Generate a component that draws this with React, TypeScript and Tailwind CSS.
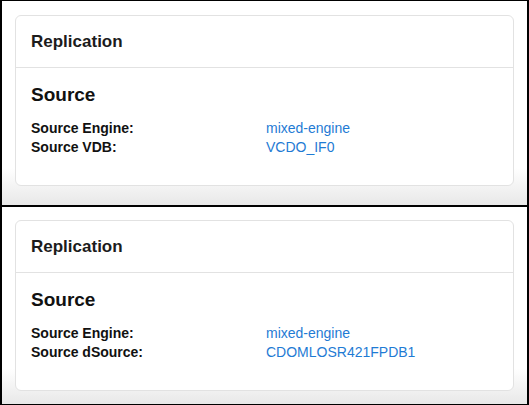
import React from 'react';

interface Row {
  label: string;
  value: string;
}

interface PanelProps {
  rows: Row[];
  className: string;
}

const ReplicationCard: React.FC<{ rows: Row[] }> = ({ rows }) => (
  <div className="h-[171px] bg-white border border-[#e2e2e2] rounded-[6px] flex flex-col">
    <div className="px-[15px] pt-[15px] pb-[14px] border-b border-[#e2e2e2]">
      <h2 className="text-[17px] leading-[22px] font-bold text-[#1c1c1c]">Replication</h2>
    </div>
    <div className="px-[15px] pt-[15px]">
      <h3 className="text-[19px] leading-[24px] font-bold text-[#111]">Source</h3>
      <div className="mt-[12px] grid grid-cols-[235px_1fr] text-[14px] leading-[18.5px]">
        {rows.map((row) => (
          <React.Fragment key={row.label}>
            <span className="font-bold text-[#111]">{row.label}</span>
            <a href="#" className="text-[#1f7bd4]">
              {row.value}
            </a>
          </React.Fragment>
        ))}
      </div>
    </div>
  </div>
);

const Panel: React.FC<PanelProps> = ({ rows, className }) => (
  <div
    className={`border-black border-l-2 border-r-2 px-[13px] bg-linear-to-b from-white from-[82%] to-[#e8e8e8] ${className}`}
  >
    <ReplicationCard rows={rows} />
  </div>
);

export default function App() {
  return (
    <div className="w-[529px] h-[405px] flex flex-col bg-white font-['Liberation_Sans',Arial,sans-serif]">
      <Panel
        className="h-[207px] border-t border-b-2 pt-[14px]"
        rows={[
          { label: 'Source Engine:', value: 'mixed-engine' },
          { label: 'Source VDB:', value: 'VCDO_IF0' },
        ]}
      />
      <Panel
        className="h-[198px] border-b pt-[13px]"
        rows={[
          { label: 'Source Engine:', value: 'mixed-engine' },
          { label: 'Source dSource:', value: 'CDOMLOSR421FPDB1' },
        ]}
      />
    </div>
  );
}
